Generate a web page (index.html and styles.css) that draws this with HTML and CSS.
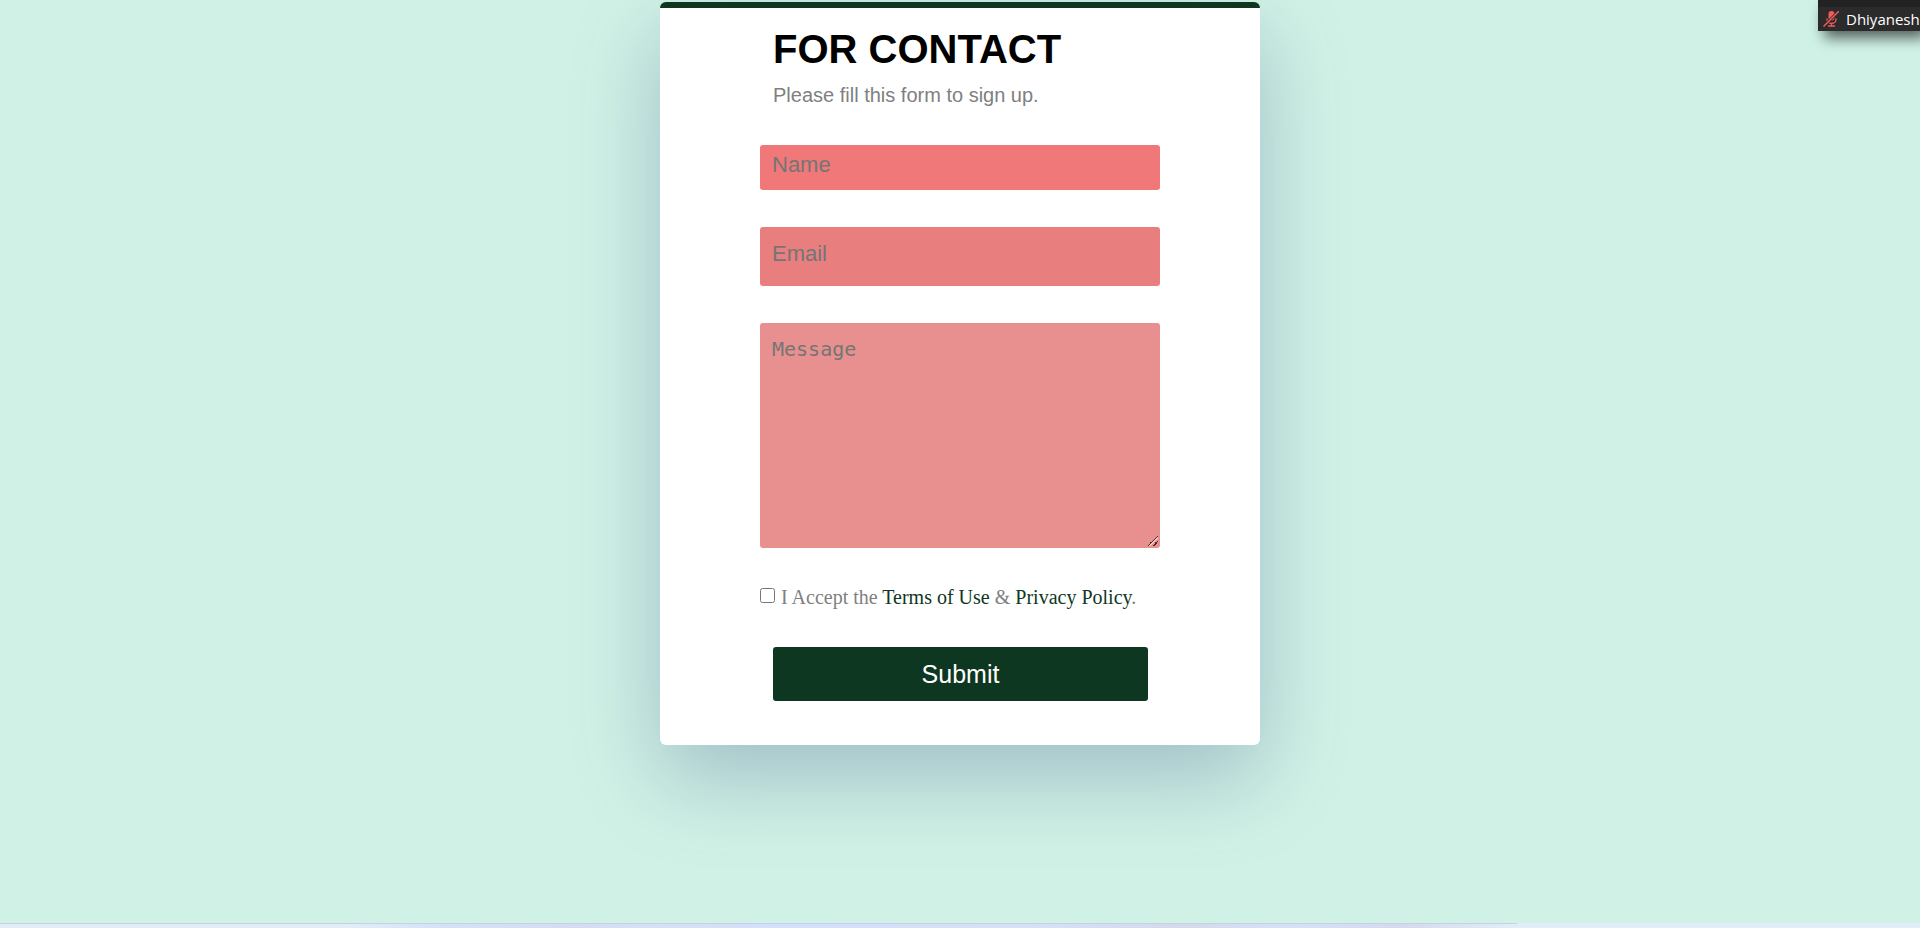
FILE: index.html
```html
<!DOCTYPE html>
<html lang="en">
<head>
<meta charset="utf-8">
<title>For Contact</title>
<meta name="viewport" content="width=device-width, initial-scale=1">
<link rel="stylesheet" href="styles.css">
</head>
<body>
<main class="page">
  <form class="card">
    <header class="intro">
      <h1 class="title">FOR CONTACT</h1>
      <p class="subtitle">Please fill this form to sign up.</p>
    </header>
    <input class="field field-name" type="text" placeholder="Name" aria-label="Name">
    <input class="field field-email" type="email" placeholder="Email" aria-label="Email">
    <textarea class="field field-message" placeholder="Message" aria-label="Message"></textarea>
    <div class="accept">
      <input class="check" type="checkbox" id="accept">
      <label for="accept">I Accept the <a href="#terms">Terms of Use</a> &amp; <a href="#privacy">Privacy Policy</a>.</label>
    </div>
    <button class="submit" type="submit">Submit</button>
  </form>
</main>
<aside class="speaker">
  <svg class="mic" viewBox="0 0 16 16" aria-hidden="true">
    <rect x="5.500" y="0" width="6" height="9.500" rx="3" fill="#f35b5b"/>
    <path d="M4 7.500v1a4.500 4 0 0 0 9 0v-1M8.500 12.500v2M5 15h7" fill="none" stroke="#f35b5b" stroke-width="1.400"/>
    <path d="M0.500 15.500 16 0" stroke="#2b2b2b" stroke-width="3"/>
    <path d="M0.500 15.500 16 0" stroke="#f35b5b" stroke-width="1.500"/>
  </svg>
  <span>Dhiyanesh</span>
</aside>
<footer class="strip"><div class="strip-line"></div></footer>
</body>
</html>
```
FILE: styles.css
```css
* { box-sizing: border-box; }

body {
  margin: 0;
  min-height: 100vh;
  display: flex;
  flex-direction: column;
  overflow: hidden;
  background: #d0f2e6;
  font-family: "Liberation Sans", Arial, sans-serif;
}

.page {
  flex: 1;
  padding-top: 2px;
}

.card {
  display: flex;
  flex-direction: column;
  max-width: 600px;
  margin: 0 auto;
  padding: 16px 100px 44px;
  border-top: 6px solid #0e3721;
  border-radius: 6px;
  background: #fff;
  box-shadow: 0 32px 88px rgba(16, 34, 102, 0.25);
}

.intro { padding: 0 13px; }

.title {
  margin: 0;
  font-size: 40px;
  line-height: 50px;
}

.subtitle {
  margin: 8px 0 36px;
  color: gray;
  font-size: 20px;
  line-height: 27px;
}

.field {
  display: block;
  width: 100%;
  margin: 0 0 37px;
  padding: 0 12px;
  border: 0;
  border-radius: 3px;
  font-family: inherit;
  font-size: 22px;
}

.field::placeholder { color: #757575; opacity: 1; }

.field-name {
  height: 45px;
  padding-bottom: 6px;
  background: #f07878;
}

.field-email {
  height: 59px;
  padding-bottom: 6px;
  background: #e87f7e;
}

.field-message {
  height: 225px;
  padding-top: 14px;
  background: #e8908f;
  font-family: "DejaVu Sans Mono", monospace;
  font-size: 20px;
  resize: both;
}

.field-message::-webkit-resizer {
  background: linear-gradient(135deg, transparent 0 45%, #4a2c2c 45% 54%, #f3c8c7 54% 62%, transparent 62% 70%, #4a2c2c 70% 80%, transparent 80%) 3px 3px / 10px 10px no-repeat;
}

.accept {
  display: flex;
  align-items: flex-start;
  gap: 6px;
  margin-bottom: 37px;
  color: gray;
  font-family: "Liberation Serif", "Times New Roman", serif;
  font-size: 20px;
  line-height: 25px;
}

.accept a { color: #0e3721; text-decoration: none; }

.check {
  flex: none;
  width: 15px;
  height: 15px;
  margin: 3px 0 0;
}

.submit {
  height: 54px;
  margin: 0 12px 0 13px;
  border: 0;
  border-radius: 3px;
  background: #0e3721;
  color: #fff;
  font-family: inherit;
  font-size: 25px;
}

.speaker {
  position: absolute;
  top: 0;
  right: 0;
  display: flex;
  align-items: center;
  gap: 7px;
  width: 102px;
  height: 31px;
  padding: 0 0 0 5px;
  border-top: 7px solid #222;
  background: #2b2b2b;
  box-shadow: 6px 7px 14px rgba(0, 0, 0, 0.6);
  color: #fff;
  font-family: "Open Sans", "Noto Sans", sans-serif;
  font-size: 15px;
  line-height: 20px;
  white-space: nowrap;
}

.mic { flex: none; width: 16px; height: 16px; }

.strip {
  height: 5px;
  background: linear-gradient(90deg, #e2edf8 0 18%, #d3e2fb 23%, #d5dbf5 30%, #d5dff8 33%, #d3e0fb 40%, #d5e0fa 54%, #d5d9ec 62%, #d5e1fb 67%, #d5d9ef 73%, #e1eef8 79%);
}

.strip-line {
  width: 79%;
  height: 1px;
  background: #c8d2e2;
}
```
